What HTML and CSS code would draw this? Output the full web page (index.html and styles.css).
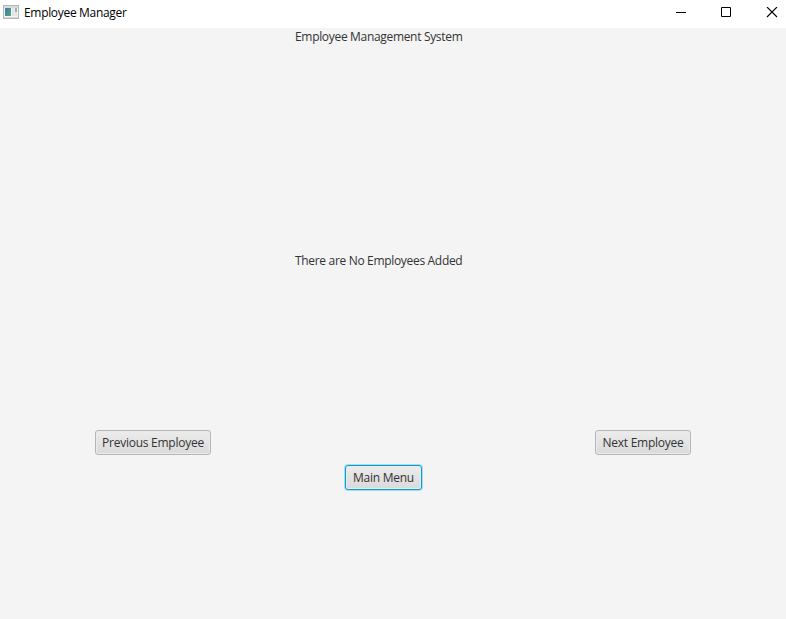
FILE: index.html
```html
<!DOCTYPE html>
<html lang="en">
<head>
<meta charset="utf-8">
<title>Employee Manager</title>
<link rel="stylesheet" href="styles.css">
</head>
<body>
<div class="window">
  <header class="titlebar">
    <svg class="app-icon" width="16" height="14" viewBox="0 0 16 14">
      <defs><linearGradient id="pane" x1="0" y1="0" x2="1" y2="1"><stop offset="0" stop-color="#3f78a8"/><stop offset="1" stop-color="#55a878"/></linearGradient></defs>
      <rect x=".5" y=".5" width="15" height="13" fill="#f4f5f6" stroke="#b3b7bb"/>
      <rect x="1" y="1" width="14" height="2" fill="#d8dbde"/>
      <rect x="2" y="3" width="6" height="8" fill="url(#pane)"/>
      <rect x="9" y="3" width="2.5" height="8" fill="#e2e5e8"/>
      <rect x="12" y="3" width="2" height="4" fill="#8fb7b2"/>
      <rect x="12" y="7" width="2" height="4" fill="#e2e5e8"/>
      <rect x="1" y="12" width="14" height="1" fill="#d8dbde"/>
    </svg>
    <span class="app-name">Employee Manager</span>
    <div class="controls">
      <svg width="12" height="12" viewBox="0 0 12 12"><path d="M0 5.5h10" stroke="#000"/></svg>
      <svg width="12" height="12" viewBox="0 0 12 12"><path d="M.5 .5h9v9h-9z" fill="none" stroke="#000"/></svg>
      <svg width="12" height="12" viewBox="0 0 12 12"><path d="M1 0l10 10M11 0L1 10" stroke="#000" stroke-width="1.1"/></svg>
    </div>
  </header>
  <main class="content">
    <h1 class="heading">Employee Management System</h1>
    <p class="message">There are No Employees Added</p>
    <nav class="pager">
      <button class="btn previous">Previous Employee</button>
      <button class="btn next">Next Employee</button>
    </nav>
    <button class="btn menu">Main Menu</button>
  </main>
</div>
</body>
</html>
```
FILE: styles.css
```css
body {
  margin: 0;
  font: 12px/16px "Open Sans", "Noto Sans", sans-serif;
  letter-spacing: -0.32px;
  color: #333;
  background: #f4f4f4;
}
.window {
  height: 619px;
  overflow: hidden;
}
.titlebar {
  display: flex;
  align-items: center;
  box-sizing: border-box;
  height: 28px;
  padding: 0 8px 3px 3px;
  background: #fff;
  color: #000;
}
.app-icon {
  margin: 0 5px 2px 0;
}
.app-name {
  white-space: nowrap;
}
.controls {
  display: flex;
  gap: 33px;
  margin-left: auto;
}
.content {
  display: flex;
  flex-direction: column;
}
.heading,
.message {
  margin: 1px 0 0 295px;
  font-size: 12px;
  font-weight: 400;
  white-space: nowrap;
}
.message {
  margin-top: 208px;
}
.pager {
  display: flex;
  justify-content: space-between;
  margin: 161px 95px 0;
}
.btn {
  box-sizing: border-box;
  height: 25px;
  padding: 0;
  border: 1px solid #b5b5b5;
  border-radius: 3px;
  background: linear-gradient(#ececec, #dadada);
  box-shadow: inset 0 0 0 1px #ebebeb;
  color: #333;
  font: inherit;
  letter-spacing: -0.25px;
  line-height: 23px;
  white-space: nowrap;
}
.previous {
  width: 116px;
}
.next {
  width: 96px;
}
.menu {
  width: 77px;
  margin: 10px 0 0 345px;
  border-color: #039ed3;
  box-shadow: 0 0 0 1px #a9dcec, inset 0 0 0 1px #ebebeb;
}
```
